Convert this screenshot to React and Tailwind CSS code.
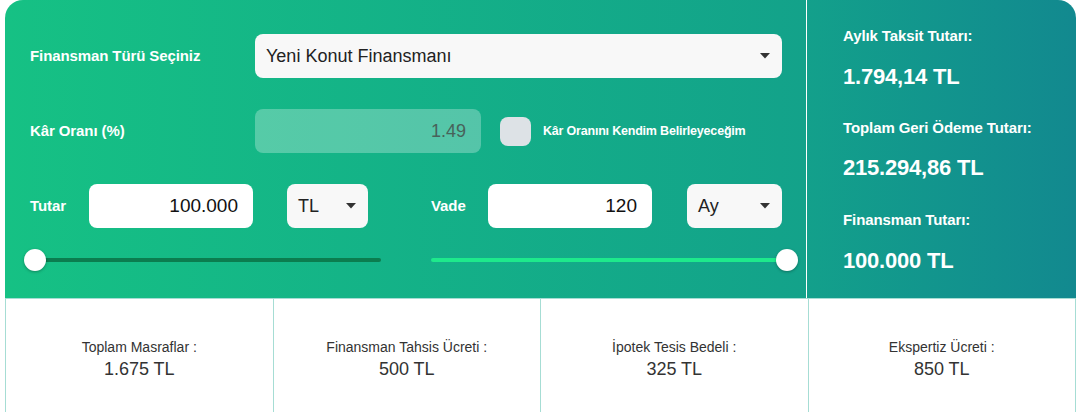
import React from "react";

const F = { fontFamily: '"Liberation Sans", Arial, sans-serif' };

function Caret() {
  return (
    <svg width="10" height="6" viewBox="0 0 10 6" className="shrink-0">
      <path d="M0 0 L10 0 L5 5.5 Z" fill="#333" />
    </svg>
  );
}

function Select({ value, className = "" }) {
  return (
    <div className={`h-[44px] rounded-[8px] bg-[#f8f8f8] flex items-center justify-between pl-[11px] pr-[12px] ${className}`}>
      <span className="text-[18px] text-[#222]">{value}</span>
      <Caret />
    </div>
  );
}

function Input({ value, className = "" }) {
  return (
    <div className={`h-[44px] rounded-[8px] bg-white flex items-center justify-end pr-[15px] ${className}`}>
      <span className="text-[19px] text-[#111]">{value}</span>
    </div>
  );
}

function Slider({ dark, left, className = "" }) {
  return (
    <div className={`relative shrink-0 h-[24px] flex items-center ${className}`}>
      <div className={`h-[4px] w-full rounded-full ${dark ? "bg-[#0b7d4f]" : "bg-[#1ee98c]"}`} />
      <div
        className={`absolute top-[1px] w-[22px] h-[22px] rounded-full bg-white shadow-[0_1px_3px_rgba(0,0,0,0.3)] ${left ? "left-[-11px]" : "right-[-11px]"}`}
      />
    </div>
  );
}

function Cost({ label, value, last }) {
  return (
    <div className={`flex-1 flex flex-col items-center pt-[39px] border-l border-t border-[#a6ddd4] ${last ? "border-r" : ""}`}>
      <span className="text-[14px] leading-[18px] text-[#333]">{label}</span>
      <span className="text-[18px] leading-[24px] text-[#333] mt-[1px]">{value}</span>
    </div>
  );
}

export default function App() {
  return (
    <div className="w-[1077px] h-[412px] bg-white overflow-hidden" style={F}>
      <div className="ml-[5px] w-[1071px]">
        <div className="flex h-[298px] rounded-t-[18px] overflow-hidden">
          <div className="w-[801px] shrink-0 bg-gradient-to-r from-[#16c184] to-[#13a28a] pl-[25px] pr-[24px] pt-[34px] text-white">
            <div className="flex items-center h-[44px]">
              <div className="w-[225px] text-[15px] font-bold tracking-[-0.1px]">Finansman Türü Seçiniz</div>
              <Select value="Yeni Konut Finansmanı" className="flex-1" />
            </div>
            <div className="flex items-center h-[44px] mt-[31px]">
              <div className="w-[225px] text-[15px] font-bold tracking-[-0.1px]">Kâr Oranı (%)</div>
              <div className="w-[226px] h-[44px] rounded-[8px] bg-[rgba(255,255,255,0.28)] flex items-center justify-end pr-[15px]">
                <span className="text-[18px] text-[#48625a]">1.49</span>
              </div>
              <div className="ml-[19px] w-[31px] h-[29px] rounded-[8px] bg-[#dde2e6]" />
              <div className="ml-[12px] text-[12.5px] font-bold tracking-[-0.2px]">Kâr Oranını Kendim Belirleyeceğim</div>
            </div>
            <div className="flex items-center h-[44px] mt-[31px]">
              <div className="w-[59px] text-[15px] font-bold tracking-[-0.1px]">Tutar</div>
              <Input value="100.000" className="w-[164px]" />
              <Select value="TL" className="w-[81px] ml-[34px]" />
              <div className="w-[57px] ml-[63px] text-[15px] font-bold tracking-[-0.1px]">Vade</div>
              <Input value="120" className="w-[164px]" />
              <Select value="Ay" className="w-[95px] ml-[35px]" />
            </div>
            <div className="flex mt-[20px]">
              <Slider dark left className="ml-[5px] w-[346px]" />
              <Slider className="ml-[50px] w-[356px]" />
            </div>
          </div>
          <div className="w-[1px] bg-[rgba(255,255,255,0.55)]" />
          <div className="flex-1 bg-gradient-to-r from-[#13a08b] to-[#12898f] pl-[36px] pt-[25px] text-white">
            <div className="text-[15px] font-bold tracking-[-0.1px]">Aylık Taksit Tutarı:</div>
            <div className="text-[22px] font-bold mt-[12px] tracking-[-0.2px]">1.794,14 TL</div>
            <div className="text-[15px] font-bold mt-[24px] tracking-[-0.1px]">Toplam Geri Ödeme Tutarı:</div>
            <div className="text-[22px] font-bold mt-[12px] tracking-[-0.2px]">215.294,86 TL</div>
            <div className="text-[15px] font-bold mt-[25px] tracking-[-0.1px]">Finansman Tutarı:</div>
            <div className="text-[22px] font-bold mt-[12px] tracking-[-0.2px]">100.000 TL</div>
          </div>
        </div>
        <div className="flex h-[114px]">
          <Cost label="Toplam Masraflar :" value="1.675 TL" />
          <Cost label="Finansman Tahsis Ücreti :" value="500 TL" />
          <Cost label="İpotek Tesis Bedeli :" value="325 TL" />
          <Cost label="Ekspertiz Ücreti :" value="850 TL" last />
        </div>
      </div>
    </div>
  );
}
